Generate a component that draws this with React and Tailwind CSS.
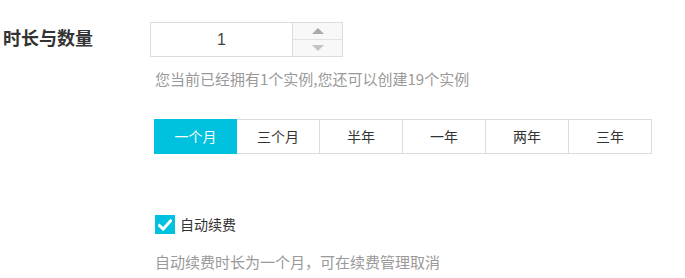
import { useState } from "react";

const periods = ["一个月", "三个月", "半年", "一年", "两年", "三年"];

export default function App() {
  const [count, setCount] = useState(1);
  const [period, setPeriod] = useState("一个月");
  const [autoRenew, setAutoRenew] = useState(true);

  return (
    <div className="flex bg-white pt-[22px] w-[685px] h-[278px] text-[#333] font-['Noto_Sans_CJK_SC','Noto_Sans',sans-serif]">
      <div className="w-[150px] shrink-0 pl-[3px] h-[31px] flex items-center text-[18px] font-bold text-[#333]">
        时长与数量
      </div>

      <div className="flex flex-col">
        <div className="flex h-[35px] w-[193px] border border-[#dcdcdc]">
          <div className="flex-1 flex items-center justify-center text-[16px] text-[#444] font-[Arimo,'Liberation_Sans',Arial,sans-serif]">
            {count}
          </div>
          <div className="w-[50px] flex flex-col border-l border-[#dcdcdc] bg-[#f8f8f8]">
            <button
              onClick={() => setCount(count + 1)}
              className="flex-1 flex items-center justify-center border-b border-[#e2e2e2]"
            >
              <span className="w-0 h-0 border-x-[6px] border-x-transparent border-b-[6px] border-b-[#aaa]" />
            </button>
            <button
              onClick={() => setCount(Math.max(1, count - 1))}
              className="flex-1 flex items-center justify-center"
            >
              <span className="w-0 h-0 border-x-[6px] border-x-transparent border-t-[6px] border-t-[#c4c4c4]" />
            </button>
          </div>
        </div>

        <p className="mt-[12px] ml-[5px] text-[15px] leading-[20px] text-[#999]">
          您当前已经拥有1个实例,您还可以创建19个实例
        </p>

        <div className="flex mt-[30px] ml-[4px]">
          {periods.map((p, i) => (
            <button
              key={p}
              onClick={() => setPeriod(p)}
              className={`w-[83px] h-[35px] text-[14px] border-y border-r ${i === 0 ? "border-l" : ""} ${
                period === p ? "bg-[#00c1de] border-[#00c1de] text-white" : "border-[#dcdcdc] text-[#333]"
              }`}
            >
              {p}
            </button>
          ))}
        </div>

        <label className="flex items-center mt-[61px] ml-[5px] h-[19px] cursor-pointer">
          <span
            onClick={() => setAutoRenew(!autoRenew)}
            className={`w-[20px] h-[19px] flex items-center justify-center ${
              autoRenew ? "bg-[#00c1de]" : "border border-[#ccc] bg-white"
            }`}
          >
            {autoRenew && (
              <svg width="14" height="12" viewBox="0 0 14 12">
                <path d="M1.5 6.5 L5.2 10 L12.5 2" fill="none" stroke="white" strokeWidth="3" strokeLinecap="square" />
              </svg>
            )}
          </span>
          <span className="ml-[5px] text-[14px] text-[#333]">自动续费</span>
        </label>

        <p className="mt-[18px] ml-[5px] text-[15px] leading-[20px] text-[#999]">
          自动续费时长为一个月，可在续费管理取消
        </p>
      </div>
    </div>
  );
}
